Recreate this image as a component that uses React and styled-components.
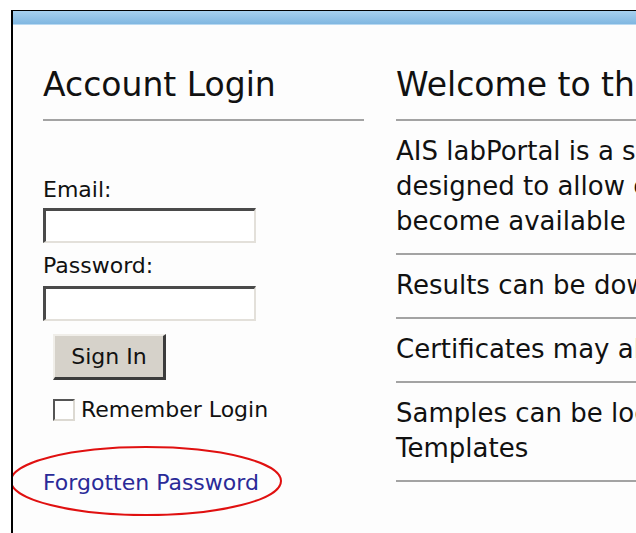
import React from 'react';
import styled, { createGlobalStyle } from 'styled-components';

const GlobalStyle = createGlobalStyle`
  html, body {
    margin: 0;
    padding: 0;
    background: #ffffff;
    overflow: hidden;
  }
  body {
    font-family: "DejaVu Sans", Verdana, sans-serif;
    color: #111;
  }
`;

const Frame = styled.div`
  margin: 10px 0 0 11px;
  border-top: 1px solid #000;
  border-left: 2px solid #000;
  height: 522px;
  background: #fdfdfd;
  overflow: hidden;
`;

const TopBar = styled.div`
  height: 13px;
  background: linear-gradient(#a6d0ee, #80b7e1);
  border-bottom: 1px solid #b9d9f1;
`;

const Columns = styled.div`
  display: flex;
  gap: 32px;
  padding: 40px 0 0 30px;
  width: 1000px;
`;

const LeftColumn = styled.div`
  width: 321px;
  flex-shrink: 0;
`;

const RightColumn = styled.div`
  width: 600px;
  flex-shrink: 0;
`;

const Heading = styled.h1`
  margin: 0;
  font-size: 33px;
  font-weight: normal;
  line-height: 40px;
  padding-bottom: 14px;
  border-bottom: 2px solid #a3a3a3;
  white-space: nowrap;
`;

const LoginForm = styled.form`
  display: flex;
  flex-direction: column;
  align-items: flex-start;
  padding-top: 56px;
  font-size: 22px;
`;

const Label = styled.label`
  line-height: 26px;
  margin: ${p => (p.$first ? '0' : '10px')} 0 ${p => (p.$first ? '5px' : '7px')};
`;

const TextInput = styled.input`
  box-sizing: border-box;
  width: 213px;
  height: 35px;
  margin: 0;
  background: #fff;
  border-style: solid;
  border-width: 3px 2px 2px 3px;
  border-color: #4a4a4a #e3e0da #e3e0da #4a4a4a;
`;

const Button = styled.button`
  box-sizing: border-box;
  margin: 13px 0 0 10px;
  width: 113px;
  height: 46px;
  padding: 0;
  font: inherit;
  font-size: 22px;
  color: #111;
  background: #d6d2ca;
  border-style: solid;
  border-width: 2px 3px 3px 2px;
  border-color: #f0eee9 #3c3c3c #3c3c3c #f0eee9;
`;

const CheckRow = styled.label`
  display: flex;
  align-items: center;
  gap: 6px;
  margin: 17px 0 0 10px;
  line-height: 26px;
`;

const CheckBox = styled.span`
  box-sizing: border-box;
  width: 22px;
  height: 22px;
  background: #fff;
  border-style: solid;
  border-width: 2px;
  border-color: #555 #dcd9d2 #dcd9d2 #555;
`;

const LinkWrap = styled.div`
  position: relative;
  margin-top: 47px;
  font-size: 22px;
  line-height: 26px;
`;

const ForgotLink = styled.a`
  color: #2a2a98;
  text-decoration: none;
`;

const Circle = styled.svg`
  position: absolute;
  left: -34px;
  top: -25px;
  pointer-events: none;
`;

const InfoRow = styled.div`
  font-size: 26px;
  line-height: 35px;
  padding: 13px 0 14px;
  border-bottom: 2px solid #a3a3a3;
  white-space: nowrap;
`;

const App = () => (
  <>
    <GlobalStyle />
    <Frame>
      <TopBar />
      <Columns>
        <LeftColumn>
          <Heading>Account Login</Heading>
          <LoginForm onSubmit={e => e.preventDefault()}>
            <Label $first>Email:</Label>
            <TextInput type="text" />
            <Label>Password:</Label>
            <TextInput type="password" />
            <Button type="submit">Sign In</Button>
            <CheckRow>
              <CheckBox />
              Remember Login
            </CheckRow>
          </LoginForm>
          <LinkWrap>
            <ForgotLink href="#">Forgotten Password</ForgotLink>
            <Circle width="274" height="72" viewBox="0 0 274 72">
              <ellipse cx="137" cy="36" rx="135" ry="34" fill="none" stroke="#e01010" strokeWidth="2" />
            </Circle>
          </LinkWrap>
        </LeftColumn>
        <RightColumn>
          <Heading>Welcome to the labPortal</Heading>
          <InfoRow>
            AIS labPortal is a secure web service
            <br />
            designed to allow clients to view results as they
            <br />
            become available
          </InfoRow>
          <InfoRow>Results can be downloaded as PDF or Excel</InfoRow>
          <InfoRow>Certificates may also be printed online</InfoRow>
          <InfoRow>
            Samples can be logged online using Sample
            <br />
            Templates
          </InfoRow>
        </RightColumn>
      </Columns>
    </Frame>
  </>
);

export default App;
